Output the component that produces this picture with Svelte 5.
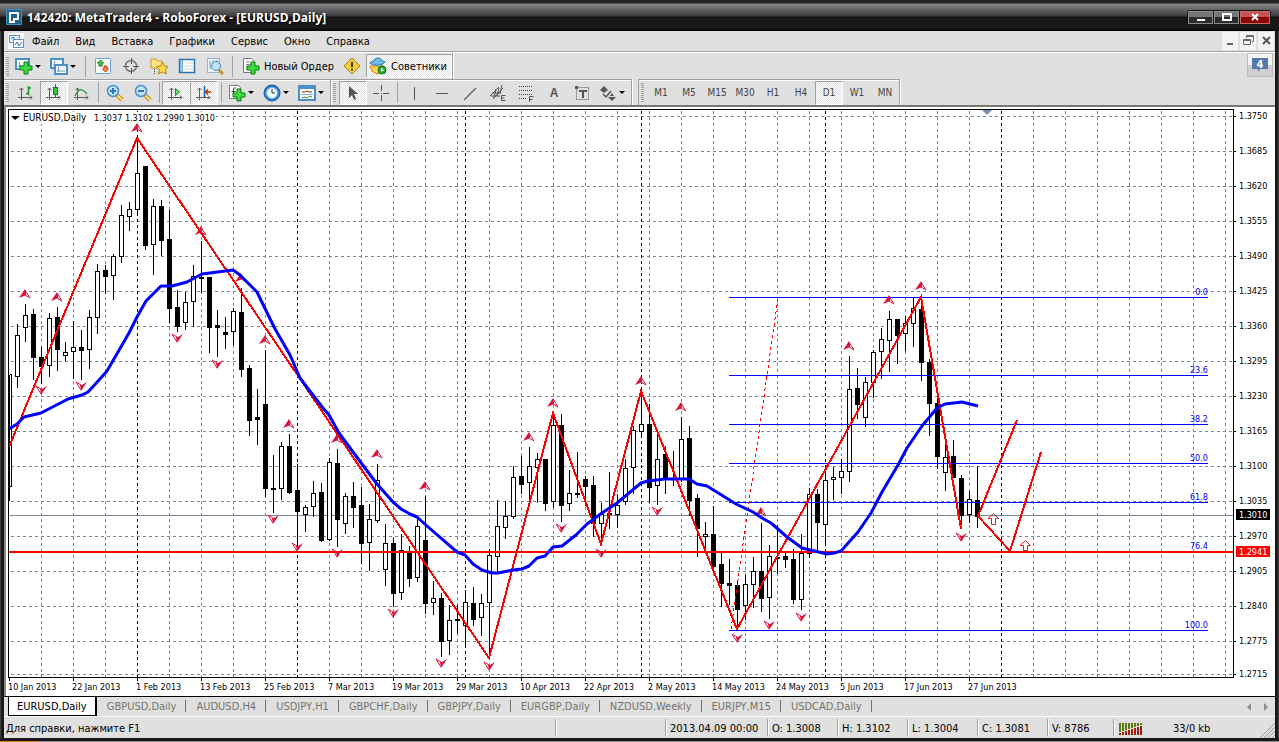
<script>
	const menus = ['Файл', 'Вид', 'Вставка', 'Графики', 'Сервис', 'Окно', 'Справка'];
	const periods = ['M1', 'M5', 'M15', 'M30', 'H1', 'H4', 'D1', 'W1', 'MN'];
	const tabs = ['EURUSD,Daily', 'GBPUSD,Daily', 'AUDUSD,H4', 'USDJPY,H1', 'GBPCHF,Daily', 'GBPJPY,Daily', 'EURGBP,Daily', 'NZDUSD,Weekly', 'EURJPY,M15', 'USDCAD,Daily'];

	let period = $state('D1');
	let tab = $state('EURUSD,Daily');

	const plus = '<path d="M8 5h4v4h4v4h-4v4H8v-4H4V9h4z" fill="#3fdc3f" stroke="#0a7a14"/>';
	const axes = '<path d="M4.500 4v12M1 13.500h14M2.500 6l2-2 2 2M13 11.500l2 2-2 2" fill="none" stroke="#5a5a5a"/>';
	const lens = (sign) => `<path d="M11 11l5 5" stroke="#b98a1c" stroke-width="4"/><path d="M11 11l5 5" stroke="#ffe27a" stroke-width="2"/><circle cx="7" cy="7" r="5.500" fill="#bfe6fb" stroke="#4a8cc8" stroke-width="1.500"/><path d="${sign}" stroke="#2f74b5" stroke-width="2"/>`;

	const icons = {
		app: '<rect x="0" y="0" width="16" height="16" rx="1" fill="#3f8fc0"/><rect x="1" y="1" width="14" height="14" fill="#1d6089"/><path d="M4 13V4h8v6H8v3z" fill="none" stroke="#fff" stroke-width="2"/>',
		charts: '<rect x="0" y="0" width="16" height="16" fill="#fff"/><rect x="1.500" y="2.500" width="10" height="7" fill="#e4f0fd" stroke="#5b93d8"/><rect x="5.500" y="6.500" width="10" height="8" fill="#fff" stroke="#5b93d8"/><path d="M7 12l2-3 2 4 3-4M3 6l2-2 2 3" fill="none" stroke="#2f6fc8"/>',
		newChart: '<rect x="1" y="2" width="13" height="10" fill="#fff" stroke="#4a8fc8" stroke-width="2"/><path d="M3 9h7M4.500 5v5" stroke="#7d98ac"/><g transform="translate(1 0)">' + plus + '</g>',
		profiles: '<rect x="1" y="2" width="12" height="9" fill="#f4faff" stroke="#4a8fc8" stroke-width="2"/><path d="M3 8h8M4.500 4v5" stroke="#7d98ac"/><rect x="5" y="8" width="12" height="9" fill="#f4faff" stroke="#4a8fc8" stroke-width="2"/><path d="M7 14h8M8.500 10v5" stroke="#7d98ac"/>',
		market: '<rect x="1.500" y="1.500" width="15" height="15" rx="1" fill="#fff" stroke="#68a2d8"/><path d="M2 6h14M2 10h14M7 2v14" stroke="#dcebf7"/><path d="M6.500 3l3 3H8v3H5V6H3.500z" fill="#4fc83c" stroke="#16801a"/><path d="M11.500 15l3-3H13V9h-3v3H8.500z" fill="#ff8a4f" stroke="#c33412"/>',
		target: '<circle cx="9" cy="9" r="5.500" fill="none" stroke="#777" stroke-width="1.500"/><path d="M9.500 1v6M9.500 11v6M1 9.500h6M11 9.500h6" stroke="#555"/>',
		navigator: '<path d="M1 2h5l1 2h5v7H1z" fill="#ffe785" stroke="#c59a23"/><path d="M4.500 12v6" stroke="#444" stroke-dasharray="1 1"/><path d="M12.500 5l2 4 4 .5-3 3 1 4.500-4-2-4 2 1-4.500-3-3 4-.5z" fill="#ffd750" stroke="#b98512"/>',
		terminal: '<rect x="1.500" y="2.500" width="15" height="13" fill="#fff" stroke="#2c73ad" stroke-width="1.500"/><path d="M2 3h3v12H2z" fill="#78b4e6"/><path d="M7 6h8M7 9h8M7 12h8" stroke="#c9d8e4"/><path d="M3 5h1M3 8h1M3 11h1" stroke="#fff"/>',
		tester: '<rect x="1.500" y="1.500" width="12" height="14" fill="#edf5fb" stroke="#9cb4c8"/><path d="M4 4v8M7 3v8M11 3v3" stroke="#6b90aa"/><path d="M13 13l4 4" stroke="#c99722" stroke-width="3"/><circle cx="10" cy="9" r="4.500" fill="#c4e2f7" stroke="#4a86b8"/>',
		order: '<path d="M1.500 1.500h8l3 3v11h-11z" fill="#fff" stroke="#777"/><path d="M4 5h4M4 7.500h6M4 10h4M4 12.500h3" stroke="#888"/><g transform="translate(1 0)">' + plus + '</g>',
		warn: '<path d="M9 1l8 8-8 8-8-8z" fill="#f7cf3a" stroke="#a9790c"/><path d="M9 5v5M9 11.500v2" stroke="#4b3500" stroke-width="2"/>',
		advisor: '<path d="M1 9h14l-2 6-5 2-5-3z" fill="#ffd24d" stroke="#c38a17"/><path d="M1 6c2 3 13 3 15-1-1-1-3-1-3-1 0-4-8-4-8 0-2 0-4 1-4 2z" fill="#6fb8ea" stroke="#2d77af"/><circle cx="13" cy="13" r="4" fill="#27ad35" stroke="#0d6f1b"/><path d="M12 11l3 2-3 2z" fill="#fff"/>',
		bars: axes + '<path d="M11.500 2v9M9 9.500h2M11.500 4h2.500" stroke="#1c8f2a" fill="none" stroke-width="1.500"/>',
		candles: axes + '<path d="M10.500 0v14" stroke="#157a20"/><rect x="8.500" y="3.500" width="4" height="7" fill="#35c63f" stroke="#157a20"/>',
		line: axes + '<path d="M2 12C6 4 9 4 14 10" stroke="#3f9c4a" fill="none" stroke-width="1.500"/>',
		zoomIn: lens('M4 7h6M7 4v6'),
		zoomOut: lens('M4 7h6'),
		scroll: axes + '<path d="M8.500 4.500l4 3.500-4 3.500z" fill="#6edb6e" stroke="#118a25"/>',
		shift: axes + '<path d="M9.500 2v11" stroke="#1d5fa8" stroke-width="1.500"/><path d="M16 8h-5M13 5.500L10.500 8l2.500 2.500" stroke="#b3320f" fill="none" stroke-width="1.500"/>',
		indicators: '<path d="M1.500 1.500h9l2 2v11h-11z" fill="#fff" stroke="#777"/><path d="M8 4H6.500Q5.500 4 5.500 6v7M3.500 7.500h4" fill="none" stroke="#333"/><g transform="translate(1 0)">' + plus + '</g>',
		clock: '<circle cx="9" cy="9" r="8" fill="#2f7fd0" stroke="#1a5aa0"/><circle cx="9" cy="9" r="5.500" fill="#f3faff" stroke="#7ab4ea"/><path d="M9 5v4h3" fill="none" stroke="#333"/>',
		templates: '<rect x="1" y="2" width="16" height="14" fill="#fff" stroke="#4a8fc8" stroke-width="2"/><path d="M1 4h16" stroke="#4a8fc8" stroke-width="2"/><path d="M4 8h3l2-1 2 1h3" stroke="#8a2c1a" fill="none"/><path d="M3 10.500h12" stroke="#7db1de"/><path d="M4 14l3-1 2 1 3-2 2 1" stroke="#2b8b3a" fill="none"/>',
		cursor: '<path d="M5 2v12l3-3 2 5 2-1-2-5h4z" fill="#555"/>',
		cross: '<path d="M9.500 1v6M9.500 11v6M1 9.500h6M11 9.500h6" stroke="#555"/><path d="M9 9.500h1" stroke="#555"/>',
		vline: '<path d="M9.500 3v13" stroke="#555"/>',
		hline: '<path d="M3 9.500h12" stroke="#555"/>',
		trend: '<path d="M3 16L15 4" stroke="#666" stroke-width="1.500"/>',
		channel: '<path d="M1 12L10 3M4 15L14 4M3 9h8M2 12h9M7 5l-2 9M10 4L8 12M13 1l-2 9" stroke="#555" fill="none"/><path d="M16.500 11.500h-4v5h4M12.500 14h3" fill="none" stroke="#555"/>',
		fibo: '<path d="M2 2.500h13M2 6.500h13M2 10.500h13M2 14.500h8" stroke="#444" stroke-dasharray="1 1"/><path d="M16.500 12.500h-4v6M12.500 15.500h3" fill="none" stroke="#555"/>',
		label: '<rect x="3.500" y="3.500" width="12" height="12" fill="none" stroke="#555" stroke-dasharray="1 1"/><path d="M2 2h3v3H2z" fill="#555"/><path d="M10 7v7M6 7h8" stroke="#555" stroke-width="2"/>',
		arrows: '<path d="M1 6l4-4 4 4-4 3zM9 13h8l-4 4zM13 9l2 3h-4z" fill="#555"/><path d="M4 10l3 3 5-6" fill="none" stroke="#555" stroke-width="1.500"/>',
		min: '<path d="M5 10h6v2H5z" fill="#666"/>',
		restore: '<path d="M6.500 5V2.500h7v6H12M6 3.500h8M3.500 6.500h7v5h-7zM3 7.500h8" fill="none" stroke="#666"/>',
		close: '<path d="M5 4l7 7M12 4l-7 7" stroke="#555" stroke-width="2"/>'
	};

	// one bar every 8px: high, low, body top, body bottom, filled
	const bars = [
		[374, 500, 374, 486, 0], [323, 387, 335, 376, 0], [303, 341, 315, 327, 0], [308, 379, 314, 357, 1],
		[346, 383, 357, 366, 1], [312, 376, 318, 365, 0], [306, 370, 317, 349, 1], [341, 360, 352, 355, 0],
		[320, 378, 347, 351, 0], [329, 379, 347, 350, 1], [309, 368, 317, 349, 0], [263, 333, 271, 317, 0],
		[264, 293, 270, 276, 1], [253, 299, 256, 275, 0], [204, 262, 215, 256, 0], [201, 230, 209, 216, 0],
		[138, 213, 173, 209, 0], [165, 249, 166, 245, 1], [198, 274, 206, 244, 0], [199, 255, 206, 240, 1],
		[209, 322, 239, 308, 1], [289, 331, 307, 326, 1], [291, 329, 302, 322, 0], [264, 326, 276, 301, 0],
		[240, 292, 277, 278, 1], [277, 352, 277, 327, 1], [309, 356, 325, 327, 1], [316, 348, 332, 334, 1],
		[307, 344, 311, 331, 0], [287, 376, 312, 369, 1], [364, 435, 368, 420, 1], [388, 444, 417, 419, 1],
		[349, 496, 404, 488, 1], [454, 512, 488, 489, 1], [441, 499, 446, 488, 0], [433, 493, 446, 492, 1],
		[463, 543, 490, 511, 1], [504, 531, 507, 514, 0], [480, 516, 493, 506, 0], [482, 541, 492, 540, 1],
		[457, 540, 462, 539, 0], [448, 546, 463, 519, 1], [492, 533, 496, 523, 0], [481, 527, 496, 507, 1],
		[486, 563, 505, 543, 1], [503, 570, 519, 542, 0], [463, 522, 480, 520, 0], [523, 585, 543, 569, 0],
		[537, 606, 543, 593, 1], [533, 599, 550, 592, 0], [545, 586, 551, 578, 1], [516, 581, 526, 577, 0],
		[495, 613, 540, 603, 1], [580, 614, 598, 602, 0], [592, 656, 598, 641, 1], [604, 654, 620, 640, 0],
		[604, 633, 619, 620, 1], [589, 646, 602, 625, 0], [586, 625, 603, 619, 1], [593, 635, 603, 617, 0],
		[548, 658, 555, 602, 0], [499, 572, 526, 556, 0], [500, 538, 516, 527, 0], [465, 518, 477, 516, 0],
		[455, 493, 476, 484, 1], [446, 498, 466, 482, 0], [452, 502, 459, 467, 0], [459, 510, 459, 503, 1],
		[413, 507, 425, 501, 0], [413, 521, 425, 505, 1], [469, 510, 493, 503, 0], [451, 497, 493, 494, 1],
		[475, 505, 479, 486, 1], [475, 536, 485, 523, 1], [502, 545, 514, 523, 0], [471, 528, 513, 514, 1],
		[493, 527, 505, 514, 0], [458, 504, 468, 501, 0], [425, 493, 430, 467, 0], [391, 435, 424, 431, 0],
		[403, 502, 424, 487, 1], [434, 504, 459, 485, 0], [445, 493, 454, 479, 1], [450, 485, 478, 479, 1],
		[416, 481, 439, 478, 0], [425, 515, 438, 500, 1], [493, 556, 498, 528, 1], [521, 552, 534, 536, 0],
		[505, 567, 534, 566, 1], [552, 606, 564, 583, 1], [558, 604, 583, 585, 1], [580, 629, 585, 609, 1],
		[574, 619, 584, 605, 0], [556, 607, 571, 584, 0], [522, 611, 571, 598, 1], [544, 618, 556, 597, 0],
		[524, 573, 557, 558, 1], [550, 567, 556, 559, 1], [548, 603, 559, 599, 1], [533, 609, 553, 599, 0],
		[487, 557, 494, 553, 0], [488, 551, 494, 522, 1], [471, 544, 480, 524, 0], [466, 499, 477, 479, 0],
		[458, 493, 471, 477, 0], [355, 481, 389, 471, 0], [367, 418, 388, 404, 1], [376, 426, 382, 417, 0],
		[349, 397, 352, 382, 0], [327, 378, 339, 351, 0], [310, 371, 319, 340, 0], [319, 363, 319, 335, 1],
		[315, 350, 323, 333, 0], [296, 346, 308, 323, 0], [297, 380, 309, 362, 1], [358, 435, 362, 403, 1],
		[396, 468, 403, 456, 1], [443, 490, 457, 472, 0], [439, 477, 456, 477, 1], [474, 524, 478, 515, 1],
		[490, 522, 499, 514, 0], [465, 527, 500, 516, 1]
	];

	const average = '9,429 17,424 24,417 41,413 68,399 82,395 88,392 99,380 107,371 129,333 137,317 146,301 161,286 172,286 187,282 202,274 233,270 240,275 257,292 274,327 290,355 300,378 306,386 323,408 329,415 339,433 353,452 377,484 393,502 401,509 410,514 417,517 427,526 457,552 465,555 473,564 482,570 492,573 498,573 513,570 522,569 529,566 537,558 545,556 553,547 562,546 576,535 587,524 602,513 617,503 641,483 648,481 665,479 689,479 697,484 707,486 715,491 736,504 753,512 762,518 771,523 787,537 802,548 827,554 834,553 841,551 858,532 871,513 882,492 898,465 907,448 922,426 937,408 945,404 962,402 978,406';

	const fractalsUp = [[25, 294], [57, 297], [137, 128], [201, 231], [241, 278], [265, 340], [289, 424], [337, 439], [377, 454], [425, 486], [529, 437], [553, 403], [641, 381], [681, 407], [761, 512], [849, 346], [889, 300], [921, 286]];
	const fractalsDown = [[41, 390], [81, 386], [177, 338], [217, 364], [273, 519], [297, 547], [337, 553], [393, 613], [441, 663], [489, 666], [561, 528], [601, 553], [657, 511], [737, 638], [769, 625], [801, 617], [961, 537]];

	const gridX = Array.from({ length: 38 }, (_, i) => 41 + i * 32);
	const months = [137, 297, 465, 641, 825, 1001];
	const prices = Array.from({ length: 16 }, (_, i) => ({ y: 116 + i * 35, text: (1.375 - i * 0.0065).toFixed(4) }));
	prices.push({ y: 674, text: '1.2715' });

	const dates = ['10 Jan', '22 Jan', '1 Feb', '13 Feb', '25 Feb', '7 Mar', '19 Mar', '29 Mar', '10 Apr', '22 Apr', '2 May', '14 May', '24 May', '5 Jun', '17 Jun', '27 Jun'];
	const fibs = [['0.0', 297], ['23.6', 375], ['38.2', 424], ['50.0', 463], ['61.8', 502], ['76.4', 551], ['100.0', 630]];
</script>

{#snippet icon(name, size = 18)}
	<svg class="icon" width={size} height={size} viewBox="0 0 {size} {size}" aria-hidden="true">{@html icons[name]}</svg>
{/snippet}

{#snippet tool(name, label, pressed = false)}
	<button class="tool" class:pressed aria-label={label}>{@render icon(name)}</button>
{/snippet}

{#snippet drop(name, label)}
	<button class="tool drop" aria-label={label}>{@render icon(name)}<span class="caret"></span></button>
{/snippet}

<div class="window">
	<header class="title">
		{@render icon('app', 16)}
		<h1>142420: MetaTrader4 - RoboForex - [EURUSD,Daily]</h1>
		<div class="winbtns">
			<button aria-label="Свернуть"><svg width="12" height="10"><path d="M2 7h8v2H2z" fill="#fff" /></svg></button>
			<button aria-label="Развернуть"><svg width="12" height="10"><path d="M2 2h8v6H2z" fill="none" stroke="#fff" stroke-width="2" /></svg></button>
			<button class="exit" aria-label="Закрыть"><svg width="12" height="10"><path d="M3 2l6 6M9 2L3 8" stroke="#fff" stroke-width="2" /></svg></button>
		</div>
	</header>

	<nav class="menu">
		{@render icon('charts', 16)}
		{#each menus as item}
			<button>{item}</button>
		{/each}
		<div class="mdi">
			<button aria-label="Свернуть график">{@render icon('min', 16)}</button>
			<button aria-label="Восстановить график">{@render icon('restore', 16)}</button>
			<button aria-label="Закрыть график">{@render icon('close', 16)}</button>
		</div>
	</nav>

	<div class="bars">
		<div class="row">
			<div class="group">
				<i class="grip"></i>
				{@render drop('newChart', 'Новый график')}
				{@render drop('profiles', 'Профили')}
				<i class="sep"></i>
				{@render tool('market', 'Обзор рынка')}
				{@render tool('target', 'Окно данных')}
				{@render tool('navigator', 'Навигатор')}
				{@render tool('terminal', 'Терминал')}
				{@render tool('tester', 'Тестер')}
				<i class="sep"></i>
				<button class="wide">{@render icon('order')}Новый Ордер</button>
				{@render tool('warn', 'Внимание')}
				<button class="wide pressed">{@render icon('advisor')}Советники</button>
			</div>
			<button class="chat" aria-label="Сообщения">
				<svg width="18" height="18"><path d="M1 2h16v11H9l-2 3v-3H1z" fill="#5878b0" /><text x="9" y="12">4</text></svg>
			</button>
		</div>
		<div class="row">
			<div class="group">
				<i class="grip"></i>
				{@render tool('bars', 'Бары')}
				{@render tool('candles', 'Свечи', true)}
				{@render tool('line', 'Линия')}
				<i class="sep slim"></i>
				{@render tool('zoomIn', 'Увеличить')}
				{@render tool('zoomOut', 'Уменьшить')}
				<i class="sep slim"></i>
				{@render tool('scroll', 'Автопрокрутка', true)}
				{@render tool('shift', 'Сдвиг графика', true)}
				<i class="sep"></i>
				{@render drop('indicators', 'Индикаторы')}
				{@render drop('clock', 'Периоды')}
				{@render drop('templates', 'Шаблоны')}
			</div>
			<div class="group">
				<i class="grip"></i>
				{@render tool('cursor', 'Курсор', true)}
				{@render tool('cross', 'Перекрестие')}
				<i class="sep slim"></i>
				{@render tool('vline', 'Вертикальная линия')}
				{@render tool('hline', 'Горизонтальная линия')}
				{@render tool('trend', 'Трендовая линия')}
				{@render tool('channel', 'Канал')}
				{@render tool('fibo', 'Фибоначчи')}
				<button class="tool letter">A</button>
				{@render tool('label', 'Метка')}
				{@render drop('arrows', 'Стрелки')}
			</div>
			<div class="group periods">
				<i class="grip"></i>
				{#each periods as p}
					<button class="tool" class:pressed={p === period} onclick={() => (period = p)}>{p}</button>
				{/each}
			</div>
		</div>
	</div>

	<main class="chart">
		<svg viewBox="6 107 1269 589" role="img" aria-label="EURUSD,Daily">
			<g class="crisp" transform="translate(0.5 0.5)">
				<g class="grid">
					{#each gridX as x}<path d="M{x} 110V677" />{/each}
					{#each prices as p}<path d="M10 {p.y}H1233" />{/each}
				</g>
				<g class="month">
					{#each months as x}<path d="M{x} 110V677" />{/each}
				</g>
				<path class="bid" d="M9 515H1233" />
				{#each bars as [high, low, top, bottom, filled], i}
					{@const x = 9 + i * 8}
					<path class="bar" d="M{x} {high}V{low}" />
					<path class="bar" class:hollow={!filled} d={i ? `M${x - 2} ${top}H${x + 2}V${bottom}H${x - 2}Z` : `M${x} ${top}H${x + 2}V${bottom}H${x}`} />
				{/each}
			</g>
			<path class="header-bg" d="M10 112H216V124H10Z" />
			<g class="crisp">
				<path class="level" d="M9 552H1233" />
				<g class="fib">
					{#each fibs as [, y]}
						{#if y !== 551}<path d="M729 {y + 0.5}H1208" />{/if}
					{/each}
				</g>
				<path class="base" d="M731 629L778 298" />
				<path class="zigzag" d="M9 447L137 138L489 658L553 413L601 544L641 391L737 629L921 297L961 529M978 516L1017 420M978 516L1010 551L1041 452" />
			</g>
			<g class="fractal">
				{#each fractalsUp as [x, y]}
					<path d="M{x} {y - 5}L{x - 4} {y + 1}L{x - 6} {y + 4}L{x - 1} {y + 2}L{x + 1} {y + 1}L{x + 1} {y - 2}Z" />
					<path class="line" d="M{x} {y - 4}L{x + 5} {y + 4}L{x} {y + 1}" />
				{/each}
				{#each fractalsDown as [x, y]}
					<path d="M{x} {y + 5}L{x + 4} {y - 1}L{x + 6} {y - 4}L{x + 1} {y - 1}L{x - 1} {y - 1}Z" />
					<path class="line" d="M{x} {y + 4}L{x - 5} {y - 4}L{x} {y - 1}" />
				{/each}
			</g>
			<polyline class="average" points={average} />
			<g class="arrow">
				<path d="M988 518.500L993.500 513.500L998.500 518.500H995.500V524.500H991.500V518.500Z" />
				<path d="M1020 545.500L1025.500 540.500L1030.500 545.500H1027.500V550.500H1023.500V545.500Z" />
			</g>

			<path class="mark" d="M982 110H992L987 115Z" />
			<path d="M11 116H20L15 120Z" />
			<text class="head" x="23" y="121">EURUSD,Daily</text>
			<text class="small" x="94" y="121">1.3037 1.3102 1.2990 1.3010</text>

			<g class="crisp" transform="translate(0.5 0.5)">
				<path class="frame" d="M8 109H1233V677H8Z" />
				{#each prices as p}<path class="frame" d="M1233 {p.y}H1235" />{/each}
				{#each dates as _, i}<path class="frame" d="M{9 + i * 64} 677V680" />{/each}
			</g>

			{#each prices as p}
				<text class="small" x="1239" y={p.y + 3}>{p.text}</text>
			{/each}
			{#each dates as d, i}
				<text class="small" x={8 + i * 64} y="690">{d} 2013</text>
			{/each}
			{#each fibs as [text, y]}
				<text class="small blue" x="1208" y={y - 2}>{text}</text>
			{/each}
			<path d="M1236 509H1270V520H1236Z" />
			<path class="alert" d="M1236 546H1270V557H1236Z" />
			<text class="small inverse" x="1239" y="518">1.3010</text>
			<text class="small inverse" x="1239" y="555">1.2941</text>
		</svg>
	</main>

	<div class="tabs">
		{#each tabs as t}
			<button class:active={t === tab} onclick={() => (tab = t)}>{t}</button>
		{/each}
		<div class="pager">
			<button aria-label="Назад"><svg width="6" height="8"><path d="M5 0v8L1 4z" /></svg></button>
			<button aria-label="Вперёд"><svg width="6" height="8"><path d="M1 0v8l4-4z" /></svg></button>
		</div>
	</div>

	<footer class="status">
		<span class="help">Для справки, нажмите F1</span>
		<span class="profile"></span>
		<span class="date">2013.04.09 00:00</span>
		<span>O: 1.3008</span>
		<span>H: 1.3102</span>
		<span>L: 1.3004</span>
		<span>C: 1.3081</span>
		<span class="volume">V: 8786</span>
		<span class="traffic">
			<svg width="24" height="12">
				{#each Array(8) as _, i}
					<path d="M{i * 3} 0h2v{9 - i}h-2z" fill="#5a7a10" />
					<path d="M{i * 3} {10 - i}h2V12h-2z" fill="#9c2010" />
				{/each}
			</svg>
			33/0 kb
		</span>
		<svg class="sizer" width="16" height="16"><path d="M1 16L16 1M5 16L16 5M9 16l7-7M13 16l3-3" /></svg>
	</footer>
	<div class="edge"></div>
</div>

<style>
	:global(body) {
		margin: 0;
		background: #1c1c1c;
	}

	.window {
		padding: 0 4px;
		background: linear-gradient(90deg, #4c4a48 0, #171717 2px, #171717 calc(100% - 2px), #4a4a4a 100%);
		font: 11px "DejaVu Sans Condensed", "DejaVu Sans", sans-serif;
		color: #000;
	}

	button {
		margin: 0;
		padding: 0;
		border: 0;
		background: none;
		color: inherit;
		font: inherit;
	}

	svg {
		display: block;
		flex: none;
	}

	/* title bar */
	.title {
		display: flex;
		align-items: center;
		gap: 5px;
		height: 31px;
		margin: 0 -4px;
		padding: 3px 8px 0 6px;
		box-sizing: border-box;
		background: linear-gradient(#242424 0, #242424 3px, #8a8a8e 4px, #606063 10px, #3c3c3e 16px, #161616 17px, #1a1a1c 28px, #000 31px);
	}

	h1 {
		margin: 0;
		font: bold 12px "Open Sans", sans-serif;
		color: #fff;
		text-shadow: 1px 1px 1px #000;
	}

	.winbtns {
		display: flex;
		gap: 1px;
		margin-left: auto;
		padding: 1px;
		border-radius: 3px;
		background: #151515;
	}

	.winbtns button {
		display: grid;
		place-items: center;
		width: 25px;
		height: 13px;
		box-sizing: border-box;
		border: 1px solid #8d8d90;
		background: linear-gradient(#77777a 50%, #2b2b2d 50%);
	}

	.winbtns .exit {
		width: 30px;
		border-color: #c96a6a;
		background: linear-gradient(#c95252 50%, #8c0606 50%);
	}

	/* menu */
	.menu {
		display: flex;
		align-items: center;
		height: 20px;
		padding-left: 4px;
		background: #e0e0e0;
		border-bottom: 1px solid #a0a0a0;
	}

	.menu > button {
		padding: 0 8px;
	}

	.mdi {
		display: flex;
		gap: 2px;
		margin: 0 1px 1px auto;
	}

	.mdi button {
		padding: 1px 0;
		background: #f3f3f3;
	}

	/* toolbars */
	.bars {
		background: #e0e0e0;
		border-top: 1px solid #fff;
	}

	.row {
		display: flex;
		height: 26px;
	}

	.group {
		display: flex;
		align-items: center;
		box-sizing: border-box;
		border-right: 1px solid #a0a0a0;
		box-shadow: 1px 0 #fff;
	}

	.row + .row .group {
		border-top: 1px solid #a0a0a0;
		box-shadow: inset 0 1px #fff, 1px 0 #fff;
	}

	.grip {
		flex: none;
		width: 3px;
		height: 19px;
		margin: 0 3px 0 2px;
		background: repeating-linear-gradient(#a0a0a0 0 1px, #e0e0e0 1px 2px);
	}

	.sep {
		flex: none;
		width: 1px;
		height: 21px;
		margin: 0 3px;
		background: #a0a0a0;
	}

	.sep.slim {
		margin: 0 2px;
	}

	.tool {
		display: flex;
		align-items: center;
		justify-content: center;
		width: 28px;
		height: 24px;
		box-sizing: border-box;
		border: 1px solid transparent;
	}

	.drop {
		justify-content: flex-start;
		gap: 2px;
		width: 35px;
		padding-left: 2px;
	}

	.caret {
		border: 3px solid transparent;
		border-top-color: #000;
		border-bottom: 0;
	}

	.wide {
		display: flex;
		align-items: center;
		gap: 4px;
		height: 24px;
		box-sizing: border-box;
		padding: 0 4px 0 6px;
	}

	.wide.pressed {
		padding: 0 4px 0 2px;
	}

	.pressed {
		border: 1px solid #fff;
		border-top-color: #a0a0a0;
		border-left-color: #a0a0a0;
		background: repeating-conic-gradient(#fff 0 25%, #e0e0e0 0 50%) 0 0 / 2px 2px;
	}

	.letter {
		font: bold 12px "Liberation Sans", sans-serif;
		color: #555;
	}

	.periods {
		margin-left: 6px;
		font-size: 10px;
		color: #444;
	}

	.periods.group {
		border-left: 1px solid #a0a0a0;
	}

	.chat {
		display: grid;
		place-items: center;
		width: 26px;
		height: 24px;
		margin-left: auto;
		margin-right: 2px;
		box-sizing: border-box;
		border: 1px solid #bbb;
		background: linear-gradient(#f4f4f4 50%, #cfcfcf 50%);
	}

	.chat text {
		fill: #fff;
		font-weight: bold;
		font-size: 11px;
		text-anchor: middle;
	}

	/* chart */
	.chart {
		border-top: 2px solid #77776e;
		border-left: 2px solid #8a8a84;
		background: #fff;
	}

	.chart svg {
		width: 100%;
		height: auto;
	}

	.crisp {
		shape-rendering: crispEdges;
	}

	.grid, .month, .bid, .frame, .fib, .base, .zigzag, .level, .average, .arrow {
		fill: none;
	}

	.grid {
		stroke: #778899;
		stroke-dasharray: 3 3;
	}

	.month {
		stroke: #000;
		stroke-dasharray: 3 3;
	}

	.bid {
		stroke: #778899;
	}

	.frame {
		stroke: #000;
	}

	.bar {
		fill: #000;
		stroke: #000;
	}

	.bar.hollow, .header-bg {
		fill: #fff;
	}

	.level, .zigzag {
		stroke: #f00;
		stroke-width: 2px;
	}

	.base {
		stroke: #f00;
		stroke-dasharray: 3 3;
	}

	.fib {
		stroke: #00f;
	}

	.average {
		stroke: #00f;
		stroke-width: 3px;
		stroke-linejoin: round;
	}

	.fractal {
		fill: #dc143c;
	}

	.fractal .line {
		fill: none;
		stroke: #dc143c;
	}

	.arrow {
		stroke: #e02020;
	}

	.mark {
		fill: #778fae;
	}

	.alert {
		fill: #f00;
	}

	.head {
		font-size: 10px;
	}

	.small {
		font-size: 9px;
	}

	.blue {
		fill: #00f;
		text-anchor: end;
	}

	.inverse {
		fill: #fff;
	}

	/* chart tabs */
	.tabs {
		display: flex;
		height: 19px;
		padding-left: 4px;
		background: #e0e0e0;
		border-top: 1px solid #000;
		border-bottom: 1px solid #fff;
		color: #76746a;
	}

	.tabs > button {
		position: relative;
		height: 19px;
		padding: 0 10px;
	}

	.tabs > button:not(.active)::after {
		content: "";
		position: absolute;
		top: 3px;
		right: 0;
		width: 1px;
		height: 12px;
		background: #76746a;
	}

	.tabs .active {
		padding: 0 8px;
		border: 1px solid #000;
		border-width: 0 2px 1px 1px;
		background: #fff;
		color: #000;
	}

	.pager {
		display: flex;
		gap: 11px;
		margin: 0 6px 0 auto;
	}

	.pager path {
		fill: #8c8c8c;
	}

	/* status bar */
	.status {
		display: flex;
		align-items: center;
		position: relative;
		height: 21px;
		background: #e0e0e0;
	}

	.status span {
		width: 70px;
		height: 17px;
		line-height: 19px;
		padding-left: 4px;
		box-sizing: border-box;
		border-left: 1px solid #a0a0a0;
		box-shadow: inset 1px 0 #fff;
		white-space: nowrap;
	}

	.status .help {
		flex: 1;
		padding-left: 2px;
		border: 0;
		box-shadow: none;
	}

	.status .profile {
		width: 110px;
	}

	.status .date {
		width: 102px;
	}

	.status .volume {
		width: 66px;
	}

	.status .traffic {
		display: flex;
		align-items: center;
		gap: 30px;
		width: 162px;
		padding: 2px 0 0 5px;
	}

	.sizer {
		position: absolute;
		right: 0;
		bottom: 0;
		fill: none;
		stroke: #9a9a9a;
	}

	.edge {
		height: 4px;
		margin: 0 -4px;
		background: linear-gradient(90deg, #d9791a 39px, #8c8c8c 39px) bottom / 100% 1px no-repeat #1a1a1c;
	}
</style>
